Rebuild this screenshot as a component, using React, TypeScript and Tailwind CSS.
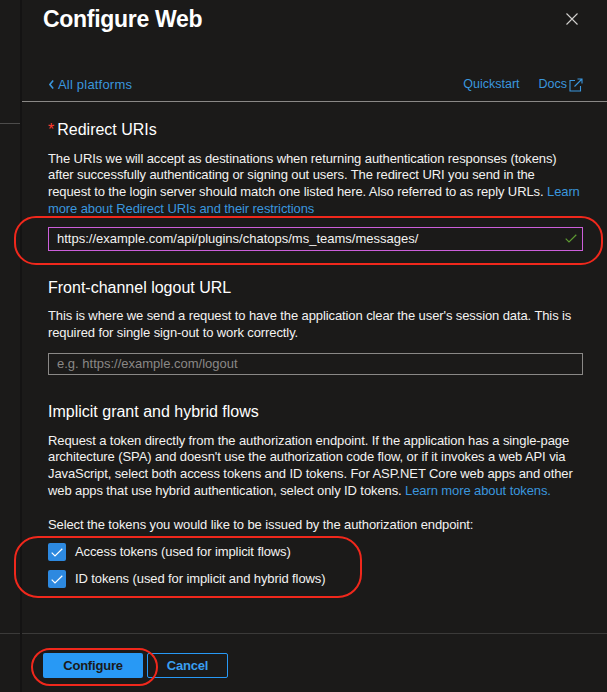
import React from "react"

function CloseIcon() {
  return (
    <svg width="12" height="12" viewBox="0 0 12 12" className="text-[#d2d0ce]">
      <path d="M0.5 0.5 L11.5 11.5 M11.5 0.5 L0.5 11.5" stroke="currentColor" strokeWidth="1.1" />
    </svg>
  )
}

function ChevronLeft() {
  return (
    <svg width="5" height="9" viewBox="0 0 5 9" className="text-[#3a96dd]">
      <path d="M4.2 0.6 L0.9 4.5 L4.2 8.4" fill="none" stroke="currentColor" strokeWidth="1.6" />
    </svg>
  )
}

function OpenInNew() {
  return (
    <svg width="14" height="14" viewBox="0 0 14 14" className="text-[#3a96dd]">
      <path d="M6 2.5 H1 V13 H11.5 V8" fill="none" stroke="currentColor" strokeWidth="1.1" />
      <path d="M5.5 8.5 L13 1 M8.5 1 H13 V5.5" fill="none" stroke="currentColor" strokeWidth="1.1" />
    </svg>
  )
}

function Check({ className }: { className: string }) {
  return (
    <svg width="12" height="9" viewBox="0 0 12 9" className={className}>
      <path d="M0.7 4.6 L4 7.9 L11.3 0.7" fill="none" stroke="currentColor" strokeWidth="1.2" />
    </svg>
  )
}

function Checkbox({ label }: { label: string }) {
  return (
    <label className="flex h-[18px] items-center gap-[9px]">
      <span className="flex h-[18px] w-[18px] items-center justify-center rounded-[2px] bg-[#2d89e0]">
        <Check className="text-white" />
      </span>
      <span className="text-[13px] leading-[18px] tracking-[-0.1px] text-[#f3f2f1]">{label}</span>
    </label>
  )
}

function Heading({ children }: { children: React.ReactNode }) {
  return <h3 className="text-[16px] leading-[22px] text-white">{children}</h3>
}

// lines are broken where the portal breaks them
function Para({ children, className }: { children: React.ReactNode; className: string }) {
  return (
    <p className={`whitespace-nowrap text-[13px] leading-[16.67px] tracking-[-0.1px] text-[#f3f2f1] ${className}`}>
      {children}
    </p>
  )
}

export default function App() {
  return (
    <div className="relative flex h-[692px] w-[607px] overflow-hidden bg-[#1b1a19] font-['Liberation_Sans',Arial,sans-serif]">
      {/* page behind the blade */}
      <div className="relative w-[22px] shrink-0 border-r-2 border-[#141313]">
        <div className="mt-[123px] h-px bg-[#4d4c4b]" />
        <div className="mt-[509px] h-px bg-[#3b3a39]" />
      </div>

      <div className="flex min-w-0 flex-1 flex-col">
        <div className="flex h-[38px] items-center justify-between pl-[21px] pr-[29px]">
          <h1 className="text-[23px] font-bold tracking-[-0.3px] text-white">Configure Web</h1>
          <button className="flex h-[12px] w-[12px] items-center justify-center">
            <CloseIcon />
          </button>
        </div>

        <div className="mt-[36px] flex h-[21px] items-center justify-between pl-[27px] pr-[24px] text-[13px] text-[#3a96dd]">
          <a className="flex items-center gap-[4px]">
            <ChevronLeft />
            <span className="tracking-[0.2px]">All platforms</span>
          </a>
          <div className="flex items-center gap-[19px] text-[12.5px]">
            <a>Quickstart</a>
            <a className="flex items-center gap-[2px]">
              Docs
              <OpenInNew />
            </a>
          </div>
        </div>
        <div className="mt-[6px] h-px bg-[#8a8886]" />

        <div className="flex-1 pl-[26px] pr-[24px] pt-[16.5px]">
          <Heading>
            <span className="mr-[3px] text-[#ff3b30]">*</span>Redirect URIs
          </Heading>
          <Para className="mt-[10px]">
            The URIs we will accept as destinations when returning authentication responses (tokens)
            <br />
            after successfully authenticating or signing out users. The redirect URI you send in the
            <br />
            request to the login server should match one listed here. Also referred to as reply URLs.{" "}
            <a className="text-[#3a96dd]">
              Learn
              <br />
              more about Redirect URIs and their restrictions
            </a>
          </Para>
          <div className="mt-[10px] flex h-[23.5px] w-[535px] items-center justify-between border border-[#cc5fdb] pl-[8px] pr-[5px]">
            <span className="text-[13px] text-[#f3f2f1]">
              https://example.com/api/plugins/chatops/ms_teams/messages/
            </span>
            <Check className="text-[#5e9b32]" />
          </div>

          <div className="mt-[26px]">
            <Heading>Front-channel logout URL</Heading>
          </div>
          <Para className="mt-[9.5px]">
            This is where we send a request to have the application clear the user's session data. This is
            <br />
            required for single sign-out to work correctly.
          </Para>
          <div className="mt-[11px] flex h-[22.5px] w-[535px] items-center border border-[#8a8886] pl-[8px]">
            <span className="text-[13px] text-[#8a8886]">e.g. https://example.com/logout</span>
          </div>

          <div className="mt-[26px]">
            <Heading>Implicit grant and hybrid flows</Heading>
          </div>
          <Para className="mt-[9.5px]">
            Request a token directly from the authorization endpoint. If the application has a single-page
            <br />
            architecture (SPA) and doesn't use the authorization code flow, or if it invokes a web API via
            <br />
            JavaScript, select both access tokens and ID tokens. For ASP.NET Core web apps and other
            <br />
            web apps that use hybrid authentication, select only ID tokens.{" "}
            <a className="text-[#3a96dd]">Learn more about tokens.</a>
          </Para>
          <Para className="mt-[18px]">Select the tokens you would like to be issued by the authorization endpoint:</Para>
          <div className="mt-[9.5px] flex flex-col gap-[9px]">
            <Checkbox label="Access tokens (used for implicit flows)" />
            <Checkbox label="ID tokens (used for implicit and hybrid flows)" />
          </div>
        </div>

        <div className="flex h-[59px] shrink-0 gap-[4px] border-t border-[#3b3a39] pl-[21px] pt-[19px]">
          <button className="h-[25px] w-[100px] rounded-[2px] bg-[#2899f5] text-[13px] font-bold tracking-[-0.2px] text-[#1b1a19]">
            Configure
          </button>
          <button className="h-[25px] w-[81px] rounded-[2px] border border-[#2899f5] text-[13px] font-bold tracking-[-0.2px] text-[#3a9ff0]">
            Cancel
          </button>
        </div>
      </div>

      {/* red annotation outlines drawn over the screenshot */}
      <div className="pointer-events-none absolute left-[14px] top-[216px] h-[49px] w-[589px] rounded-[22px] border-2 border-[#f0281c]" />
      <div className="pointer-events-none absolute left-[14px] top-[536px] h-[62px] w-[348px] rounded-[24px] border-2 border-[#f0281c]" />
      <div className="pointer-events-none absolute left-[31px] top-[648px] h-[38px] w-[127px] rounded-[19px] border-2 border-[#f0281c]" />
    </div>
  )
}
